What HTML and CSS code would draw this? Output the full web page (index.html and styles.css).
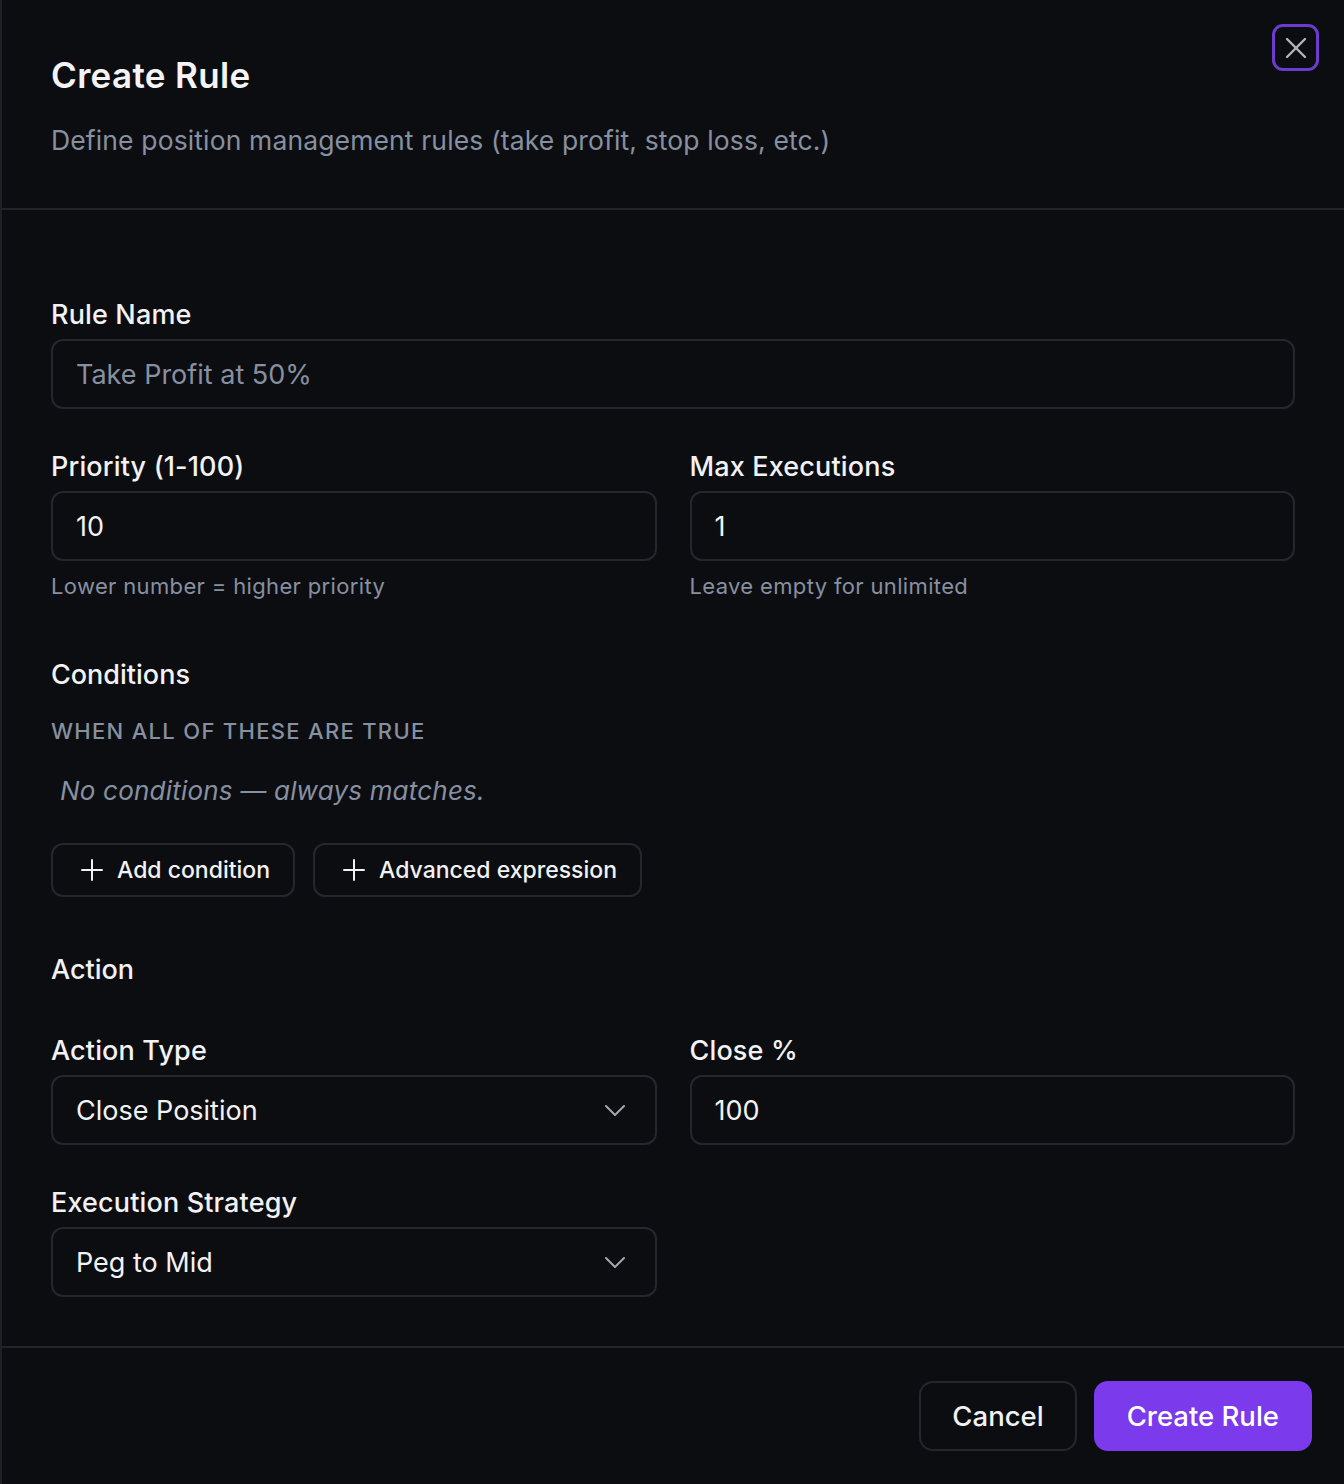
FILE: index.html
```html
<!DOCTYPE html>
<html lang="en">

<head>
  <meta charset="UTF-8">
  <meta name="viewport" content="width=device-width, initial-scale=1.0">
  <title>Create Rule</title>
  <link rel="stylesheet" href="styles.css">
</head>

<body>
  <div class="dialog">
    <button class="close-btn" aria-label="Close">
      <svg width="20" height="20" viewBox="0 0 20 20">
        <path d="M1 1 L19 19 M19 1 L1 19" stroke="currentColor" stroke-width="2.4" stroke-linecap="round" fill="none" />
      </svg>
    </button>

    <header class="dialog-header">
      <h2 class="dialog-title">Create Rule</h2>
      <p class="dialog-desc">Define position management rules (take profit, stop loss, etc.)</p>
    </header>

    <div class="dialog-body">
      <div class="field">
        <label class="field-label">Rule Name</label>
        <input class="input" type="text" placeholder="Take Profit at 50%">
      </div>

      <div class="row gap-top">
        <div class="field">
          <label class="field-label">Priority (1-100)</label>
          <input class="input" type="text" value="10">
          <span class="hint">Lower number = higher priority</span>
        </div>
        <div class="field">
          <label class="field-label">Max Executions</label>
          <input class="input" type="text" value="1">
          <span class="hint">Leave empty for unlimited</span>
        </div>
      </div>

      <section class="section conditions">
        <h3 class="section-title">Conditions</h3>
        <div class="cond-caption">When all of these are true</div>
        <p class="cond-empty">No conditions — always matches.</p>
        <div class="btn-row">
          <button class="btn-outline">
            <svg width="22" height="22" viewBox="0 0 22 22">
              <path d="M11 1 V21 M1 11 H21" stroke="currentColor" stroke-width="2" stroke-linecap="round" fill="none" />
            </svg>
            Add condition
          </button>
          <button class="btn-outline">
            <svg width="22" height="22" viewBox="0 0 22 22">
              <path d="M11 1 V21 M1 11 H21" stroke="currentColor" stroke-width="2" stroke-linecap="round" fill="none" />
            </svg>
            Advanced expression
          </button>
        </div>
      </section>

      <section class="section">
        <h3 class="section-title">Action</h3>
        <div class="row action-row">
          <div class="field">
            <label class="field-label">Action Type</label>
            <div class="input select">
              <span>Close Position</span>
              <svg width="20" height="11" viewBox="0 0 20 11">
                <path d="M1 1 L10 10 L19 1" stroke="currentColor" stroke-width="2" stroke-linecap="round" stroke-linejoin="round" fill="none" />
              </svg>
            </div>
          </div>
          <div class="field">
            <label class="field-label">Close %</label>
            <input class="input" type="text" value="100">
          </div>
        </div>
        <div class="row strategy-row">
          <div class="field">
            <label class="field-label">Execution Strategy</label>
            <div class="input select">
              <span>Peg to Mid</span>
              <svg width="20" height="11" viewBox="0 0 20 11">
                <path d="M1 1 L10 10 L19 1" stroke="currentColor" stroke-width="2" stroke-linecap="round" stroke-linejoin="round" fill="none" />
              </svg>
            </div>
          </div>
          <div></div>
        </div>
      </section>
    </div>

    <footer class="dialog-footer">
      <button class="btn btn-secondary">Cancel</button>
      <button class="btn btn-primary">Create Rule</button>
    </footer>
  </div>
</body>

</html>
```

FILE: styles.css
```css
* {
  box-sizing: border-box;
}

body {
  margin: 0;
  background: #0c0d10;
  font-family: Inter, "Noto Sans", sans-serif;
  color: #f2f2f4;
}

.dialog {
  position: relative;
  min-height: 100vh;
  border-left: 2px solid #1f2128;
  background: #0c0d10;
}

.close-btn {
  position: absolute;
  top: 24px;
  right: 25px;
  width: 47px;
  height: 47px;
  display: flex;
  align-items: center;
  justify-content: center;
  background: transparent;
  border: 3px solid #6a3dcc;
  border-radius: 11px;
  color: #b3b5bc;
  padding: 0;
}

.dialog-header {
  padding: 55px 49px 50px 49px;
  border-bottom: 2px solid #22242b;
}

.dialog-title {
  margin: 0;
  font-size: 35px;
  line-height: 40px;
  font-weight: 600;
  letter-spacing: 0.35px;
  color: #f4f4f6;
}

.dialog-desc {
  margin: 27px 0 0;
  font-size: 26.5px;
  line-height: 36px;
  letter-spacing: 0.13px;
  color: #8790a1;
}

.dialog-body {
  padding: 87px 49px 49px 49px;
}

.field {
  display: flex;
  flex-direction: column;
}

.field-label {
  font-size: 27px;
  line-height: 36px;
  font-weight: 500;
  letter-spacing: 0.15px;
  color: #f2f2f4;
  margin-bottom: 6px;
}

.input {
  height: 70px;
  width: 100%;
  border: 2px solid #25272e;
  border-radius: 12px;
  background: transparent;
  padding: 0 23px;
  font-family: inherit;
  font-size: 27px;
  color: #f2f2f4;
  outline: none;
}

.input::placeholder {
  color: #8790a1;
}

.select {
  display: flex;
  align-items: center;
  justify-content: space-between;
  padding-right: 30px;
}

.select svg {
  color: #a3a6ad;
}

.hint {
  margin-top: 10px;
  font-size: 22px;
  line-height: 30px;
  letter-spacing: 0.35px;
  color: #8790a1;
}

.row {
  display: grid;
  grid-template-columns: 1fr 1fr;
  gap: 33px;
}

.gap-top {
  margin-top: 40px;
}

.section {
  margin-top: 55px;
}

.conditions {
  margin-top: 56px;
}

.section-title {
  margin: 0;
  font-size: 27px;
  line-height: 36px;
  font-weight: 500;
  color: #f2f2f4;
}

.cond-caption {
  margin-top: 23px;
  font-size: 22px;
  line-height: 30px;
  font-weight: 500;
  text-transform: uppercase;
  letter-spacing: 1.3px;
  color: #8790a1;
}

.cond-empty {
  margin: 27px 0 0;
  padding-left: 9px;
  font-size: 26px;
  line-height: 36px;
  font-style: italic;
  letter-spacing: 0.2px;
  color: #8790a1;
}

.btn-row {
  display: flex;
  gap: 18px;
  margin-top: 34px;
}

.btn-outline {
  display: flex;
  align-items: center;
  gap: 14px;
  height: 54px;
  padding: 0 23px 0 28px;
  background: transparent;
  border: 2px solid #25272e;
  border-radius: 12px;
  font-family: inherit;
  font-size: 23px;
  font-weight: 500;
  color: #f2f2f4;
}

.action-row {
  margin-top: 45px;
}

.strategy-row {
  margin-top: 40px;
}

.dialog-footer {
  display: flex;
  justify-content: flex-end;
  gap: 17px;
  padding: 33px 32px 33px;
  border-top: 2px solid #22242b;
}

.btn {
  height: 70px;
  padding: 0 31px;
  border-radius: 14px;
  font-family: inherit;
  font-size: 27.5px;
  font-weight: 500;
}

.btn-secondary {
  background: transparent;
  border: 2px solid #25272e;
  color: #f2f2f4;
}

.btn-primary {
  background: #7c3aed;
  border: 2px solid #7c3aed;
  color: #ffffff;
}
```
